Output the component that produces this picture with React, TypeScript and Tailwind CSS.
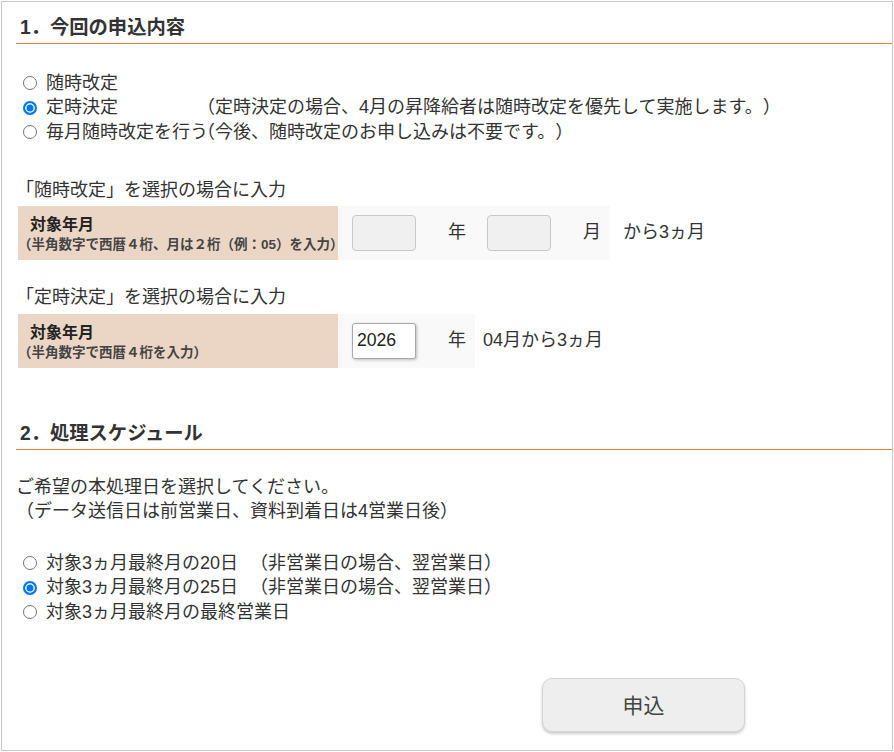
import React from "react";

const RadioRow = ({
  name,
  label,
  checked,
  note,
}: {
  name: string;
  label: string;
  checked?: boolean;
  note?: string;
}) => {
  return (
    <>
      <label className="flex items-center h-[24.5px] pl-[7px] whitespace-nowrap">
        <input
          type="radio"
          name={name}
          defaultChecked={checked}
          className="appearance-none w-[14px] h-[14px] m-0 shrink-0 rounded-full border-[1.5px] border-[#767676] bg-white checked:border-2 checked:border-[#0075ff] checked:bg-[#0075ff] checked:shadow-[inset_0_0_0_1.5px_#fff]"
        />
        <span className="ml-[9px]">{label}</span>
      </label>
      <div className="flex items-center h-[24.5px] whitespace-nowrap">{note}</div>
    </>
  );
};

const SectionTitle = ({ children }: { children: React.ReactNode }) => (
  <div>
    <div className="pl-[4px] pb-[2px] leading-[26px] text-[19.3px] font-bold text-[#333]">
      {children}
    </div>
    <div className="h-px w-full bg-[#ed7d31]" />
  </div>
);

const LabelCell = ({ sub }: { sub: string }) => (
  <div className="w-[320px] bg-[#ebd6c5] pt-[9px]">
    <div className="pl-[12px] text-[16px] font-bold leading-[20px] text-[#222]">対象年月</div>
    <div className="text-[13.5px] font-bold leading-[20px] text-[#444] whitespace-nowrap">{sub}</div>
  </div>
);

export default function App() {
  return (
    <div className="w-[894px] h-[752px] bg-white font-['Liberation_Sans','Noto_Sans_CJK_JP',sans-serif] text-[18px] text-[#333] [text-spacing-trim:space-all]">
      <div className="ml-px mt-px w-[892px] h-[750px] border border-[#c8c8c8] pl-[14px] pt-[13px]">
        <SectionTitle>1．今回の申込内容</SectionTitle>

        <div className="mt-[27px] grid grid-cols-[181px_1fr]">
          <RadioRow name="kind" label="随時改定" />
          <RadioRow
            name="kind"
            label="定時決定"
            checked
            note="（定時決定の場合、4月の昇降給者は随時改定を優先して実施します。）"
          />
          <RadioRow
            name="kind"
            label="毎月随時改定を行う"
            note="（今後、随時改定のお申し込みは不要です。）"
          />
        </div>

        <div className="mt-[33.5px] leading-[24.5px]">「随時改定」を選択の場合に入力</div>
        <div className="mt-[3px] ml-[2px] flex items-center">
          <div className="flex h-[54px]">
            <LabelCell sub="（半角数字で西暦４桁、月は２桁（例：05）を入力）" />
            <div className="flex items-center bg-[#f9f9f9] pl-[14px] pr-[9px]">
              <input
                disabled
                className="w-[64px] h-[36px] bg-[#f0f0f0] border border-[#c8c8c8] rounded-[4px]"
              />
              <span className="ml-[32px]">年</span>
              <input
                disabled
                className="ml-[21px] w-[64px] h-[36px] bg-[#f0f0f0] border border-[#c8c8c8] rounded-[4px]"
              />
              <span className="ml-[32px]">月</span>
            </div>
          </div>
          <span className="ml-[13px]">から3ヵ月</span>
        </div>

        <div className="mt-[25.75px] leading-[24.5px]">「定時決定」を選択の場合に入力</div>
        <div className="mt-[3.75px] ml-[2px] flex items-center">
          <div className="flex h-[54px]">
            <LabelCell sub="（半角数字で西暦４桁を入力）" />
            <div className="flex items-center bg-[#f9f9f9] pl-[14px] pr-[9px]">
              <input
                defaultValue="2026"
                className="w-[64px] h-[36px] bg-white border border-[#a9a9a9] rounded-[3px] pl-[4px] text-[17.6px] text-[#222] shadow-[1px_1px_3px_rgba(0,0,0,0.25)]"
              />
              <span className="ml-[32px]">年</span>
            </div>
          </div>
          <span className="ml-[8px]">04月から3ヵ月</span>
        </div>

        <div className="mt-[53px]">
          <SectionTitle>2．処理スケジュール</SectionTitle>
        </div>

        <div className="mt-[25.75px] leading-[24px]">
          <div>ご希望の本処理日を選択してください。</div>
          <div>（データ送信日は前営業日、資料到着日は4営業日後）</div>
        </div>

        <div className="mt-[27.75px] grid grid-cols-[234px_1fr]">
          <RadioRow name="day" label="対象3ヵ月最終月の20日" note="（非営業日の場合、翌営業日）" />
          <RadioRow
            name="day"
            label="対象3ヵ月最終月の25日"
            checked
            note="（非営業日の場合、翌営業日）"
          />
          <RadioRow name="day" label="対象3ヵ月最終月の最終営業日" />
        </div>

        <div className="mt-[53.75px] pl-[526px]">
          <button className="w-[203px] h-[54px] rounded-[10px] bg-[#eeeeee] border border-[#d4d4d4] shadow-[0_2px_3px_rgba(0,0,0,0.2)] text-[20.9px] text-[#444]">
            申込
          </button>
        </div>
      </div>
    </div>
  );
}
